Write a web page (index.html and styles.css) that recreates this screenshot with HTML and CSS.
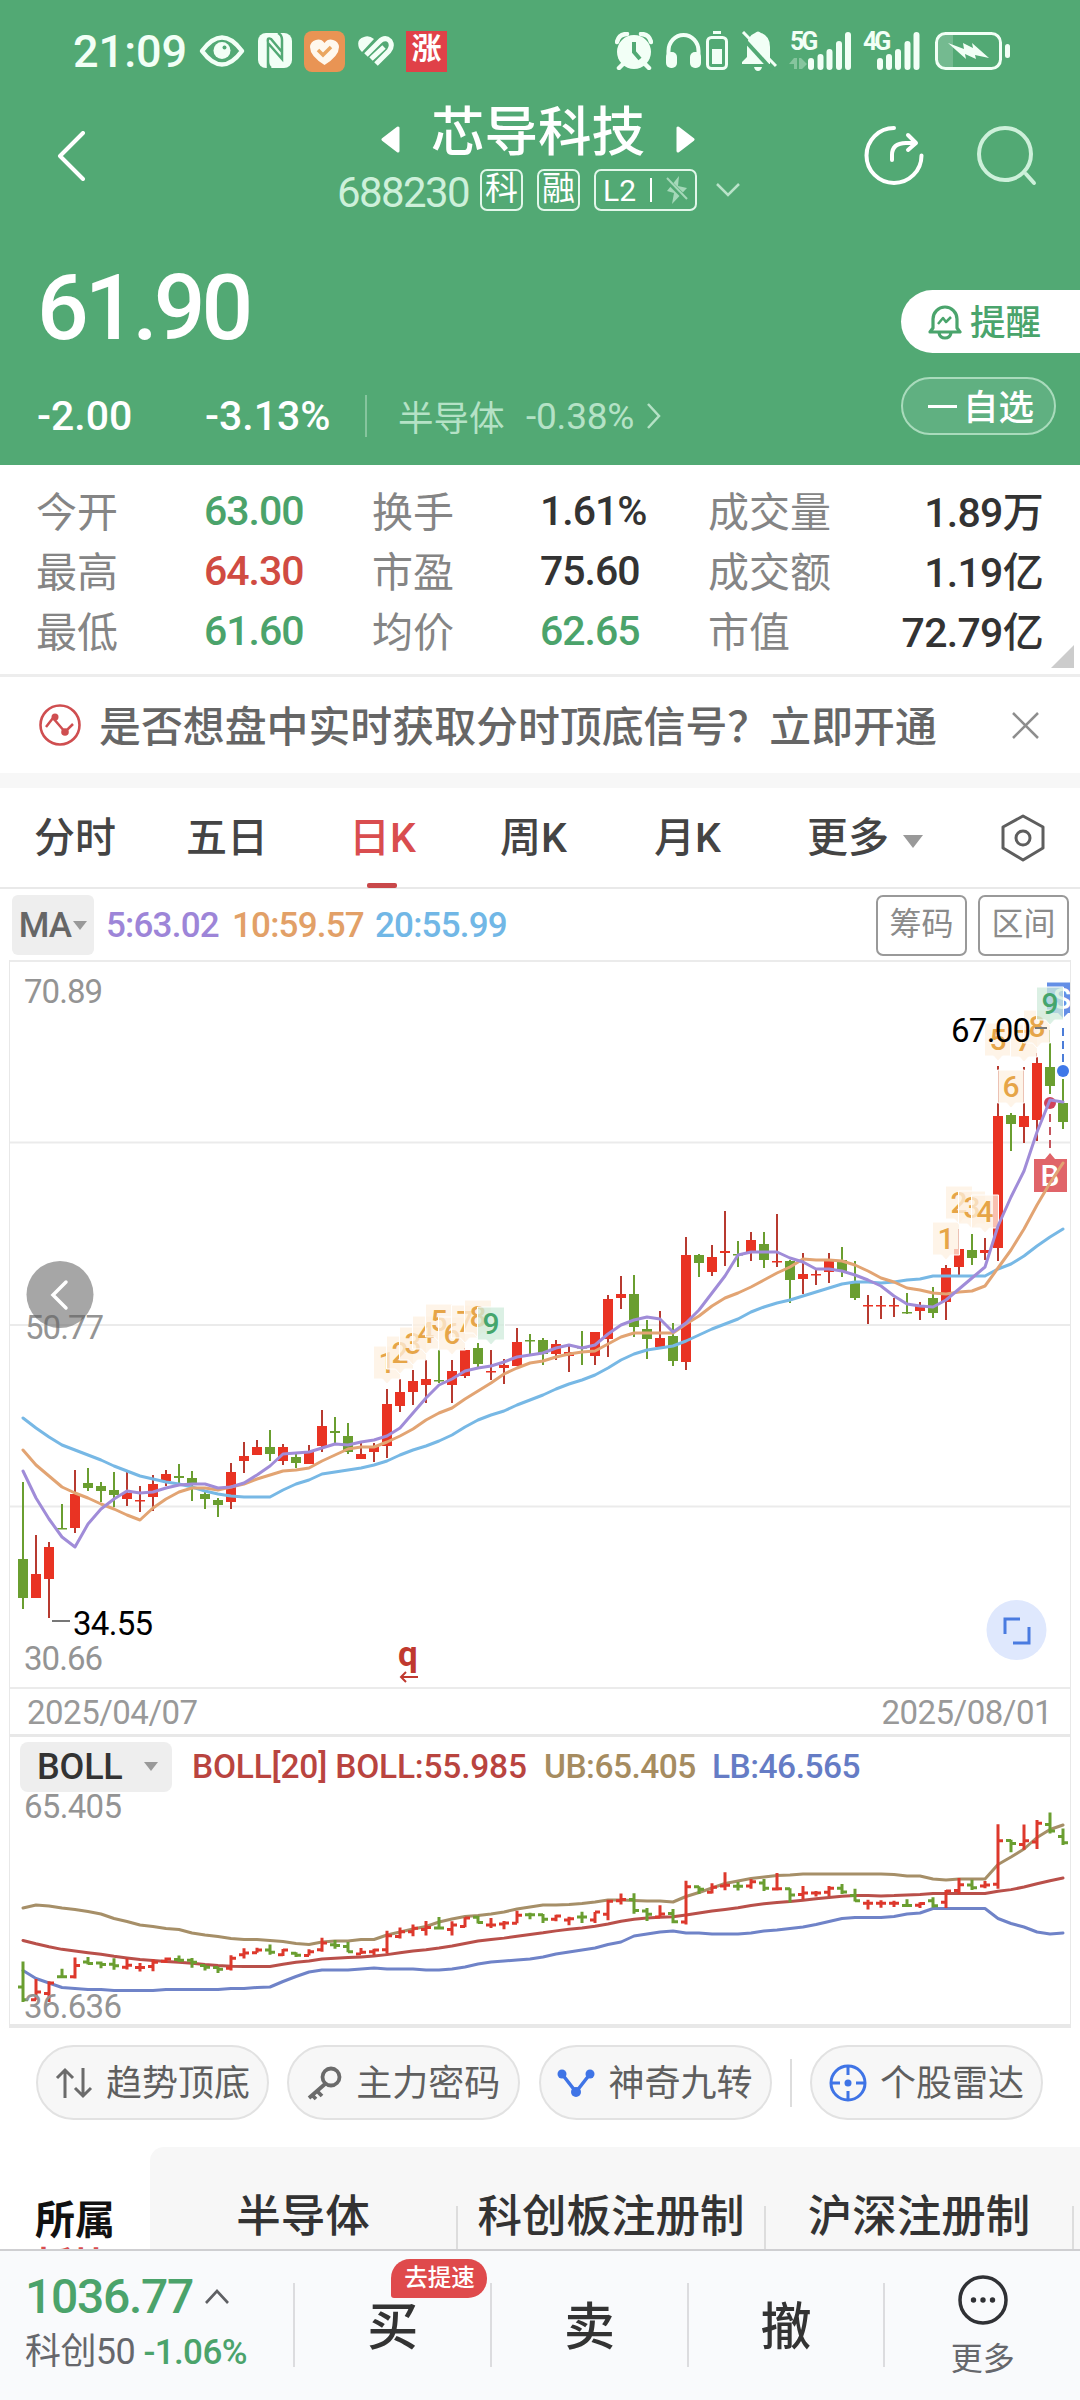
FILE: index.html
```
<!DOCTYPE html>
<html lang="zh-CN">
<head>
    <meta charset="UTF-8">
    <meta name="viewport" content="width=device-width, initial-scale=1.0">
    <title>芯导科技 688230</title>
    <link rel="stylesheet" href="styles.css">
</head>
<body>
    <header class="header">
        <div class="status-bar">
            <div class="status-left">
                <span class="clock">21:09</span>
                <svg class="ic-eye" width="46" height="32" viewBox="0 0 46 32">
                    <path d="M3 16Q23 -11 43 16Q23 43 3 16Z" fill="none" stroke="#f2fff6" stroke-width="4.5" stroke-linejoin="round"/>
                    <circle cx="23" cy="15.500" r="8.500" fill="#f2fff6"/>
                    <circle cx="25.500" cy="12.500" r="2" fill="#52a974"/>
                </svg>
                <svg class="ic-nfc" width="34" height="36" viewBox="0 0 34 36">
                    <rect width="34" height="35" rx="8" fill="#f2fff6"/>
                    <path d="M10 35V10L24 26V7Q24 2 20 0M10 9Q9 4 13 6L24 19M10 10V28Q10 33 13 35" fill="none" stroke="#52a974" stroke-width="2.500"/>
                </svg>
                <svg class="ic-health" width="41" height="41" viewBox="0 0 41 41">
                    <rect width="41" height="41" rx="8" fill="#e99454"/>
                    <path d="M20.500 34Q6 25 6 16A8 8 0 0 1 20.500 12A8 8 0 0 1 35 16Q35 25 20.500 34Z" fill="#fff8ee"/>
                    <path d="M14 19L19 24L27 16" fill="none" stroke="#eaa660" stroke-width="3.500"/>
                </svg>
                <svg class="ic-heart" width="36" height="31" viewBox="0 0 36 31">
                    <path d="M1 12Q-2 3 6 1Q11 -1 16 3L4 16Q2 14 1 12Z" fill="#f2fff6"/>
                    <path d="M8 19L21 6Q27 0 32 5Q35 10 31 15L18 28M13 23L26 11" fill="none" stroke="#f2fff6" stroke-width="5"/>
                </svg>
                <span class="ic-rise">涨</span>
            </div>
            <div class="status-right">
                <svg width="38" height="38" viewBox="0 0 38 38">
                    <circle cx="19" cy="20" r="17" fill="#f2fff6"/>
                    <path d="M2 10Q4 2 12 2M26 2Q34 2 36 10M8 32L4 36M30 32L34 36" fill="none" stroke="#f2fff6" stroke-width="4.500" stroke-linecap="round"/>
                    <path d="M19 10V20L25 27" fill="none" stroke="#52a974" stroke-width="4"/>
                </svg>
                <svg class="ic-headset" width="62" height="40" viewBox="0 0 62 40">
                    <path d="M2.500 28V20A15 16 0 0 1 32.500 20V28" fill="none" stroke="#f2fff6" stroke-width="4"/>
                    <rect x="0" y="21" width="11" height="16" rx="5" fill="#f2fff6"/>
                    <rect x="24" y="21" width="11" height="16" rx="5" fill="#f2fff6"/>
                    <rect x="47" y="0" width="8" height="3" fill="#f2fff6"/>
                    <rect x="41.500" y="6.500" width="19" height="31" rx="4" fill="none" stroke="#f2fff6" stroke-width="3"/>
                    <rect x="46" y="18" width="10" height="15" fill="#f2fff6"/>
                </svg>
                <svg class="ic-mute" width="36" height="40" viewBox="0 0 36 40">
                    <path d="M1 33V31L6 26V16Q6 5 14 2Q17 -1 20 2Q29 5 29 16V33ZM13 36H21Q20 40 17 40Q14 40 13 36Z" fill="#f2fff6"/>
                    <path d="M-1 4L31 39" stroke="#52a974" stroke-width="4"/>
                    <path d="M2 1L35 35" stroke="#f2fff6" stroke-width="3"/>
                </svg>
                <svg class="ic-signal" width="64" height="38" viewBox="0 0 64 38">
                    <text x="1" y="18" class="net">5G</text>
                    <path d="M5 26L0 32H5V37H8V26ZM10 37V26H12L18 32L13 37Z" fill="#86c59e"/>
                    <path d="M22 29V35M31.500 25V35M40.500 20V35M50 12V35M59 3V35" stroke="#f2fff6" stroke-width="6" stroke-linecap="round"/>
                </svg>
                <svg class="ic-signal second" width="58" height="38" viewBox="0 0 58 38">
                    <text x="0" y="18" class="net">4G</text>
                    <path d="M17 29V35M26 25V35M35 20V35M44.500 12V35M53.500 3V35" stroke="#f2fff6" stroke-width="6" stroke-linecap="round"/>
                </svg>
                <svg class="ic-battery" width="76" height="38" viewBox="0 0 76 38">
                    <rect x="3" y="3" width="15" height="32" fill="#74ba90"/>
                    <rect x="1.500" y="1.500" width="64" height="35" rx="9" fill="none" stroke="#f2fff6" stroke-width="3"/>
                    <path d="M13 11L29 17L28 11L38 16L37 11L54 26L40 23L41 27L30 22L31 27Z" fill="#f2fff6"/>
                    <rect x="70" y="12" width="5" height="14" rx="2.500" fill="#f2fff6"/>
                </svg>
            </div>
        </div>

        <div class="nav">
            <svg class="back" width="28" height="50" viewBox="0 0 28 50"><path d="M26 2L3 25L26 48" fill="none" stroke="#fff" stroke-width="4" stroke-linecap="round" stroke-linejoin="round"/></svg>
            <div class="nav-center">
                <div class="stock-name">
                    <svg width="19" height="27" viewBox="0 0 19 27"><path d="M17 2V25L2 13.500Z" fill="#fff" stroke="#fff" stroke-width="3" stroke-linejoin="round"/></svg>
                    <h1>芯导科技</h1>
                    <svg width="19" height="27" viewBox="0 0 19 27"><path d="M2 2V25L17 13.500Z" fill="#fff" stroke="#fff" stroke-width="3" stroke-linejoin="round"/></svg>
                </div>
                <div class="stock-code">
                    <span class="code">688230</span>
                    <span class="tag">科</span>
                    <span class="tag">融</span>
                    <span class="tag level">L2<i></i>
                        <svg width="22" height="28" viewBox="0 0 22 28"><path d="M13 0L12 10L21 12L6 28L8 17L1 15Z" fill="#a5d8b9"/><path d="M0 3L21 24" stroke="#52a974" stroke-width="5"/><path d="M1 2L21 23" stroke="#a5d8b9" stroke-width="2"/></svg>
                    </span>
                    <svg class="chev" width="24" height="14" viewBox="0 0 24 14"><path d="M1 1L12 12L23 1" fill="none" stroke="#b9e3c9" stroke-width="2.500"/></svg>
                </div>
            </div>
            <div class="nav-icons">
                <svg width="60" height="60" viewBox="0 0 60 60" fill="none" stroke="#fff" stroke-width="4" stroke-linecap="round" stroke-linejoin="round">
                    <path d="M30 2A27.500 27.500 0 1 0 57.500 29.500M28 34V29Q28 17 42 17H51M44 9L52 17L44 24"/>
                </svg>
                <svg width="60" height="60" viewBox="0 0 60 60" fill="none" stroke="#cdf0da" stroke-width="4" stroke-linecap="round">
                    <circle cx="28" cy="28" r="26"/><path d="M49 48L57 57"/>
                </svg>
            </div>
        </div>

        <div class="quote">
            <div class="quote-main">
                <div class="price">61.90</div>
                <div class="change">
                    <span class="diff">-2.00</span>
                    <span class="pct">-3.13%</span>
                    <span class="sector">半导体</span>
                    <span class="sector-pct">-0.38%</span>
                    <svg width="14" height="26" viewBox="0 0 14 26"><path d="M1 1L12 13L1 25" fill="none" stroke="#b5e2c6" stroke-width="2.500"/></svg>
                </div>
            </div>
            <div class="quote-side">
                <div class="remind">
                    <svg width="34" height="36" viewBox="0 0 34 36" fill="none" stroke="#4aa46c" stroke-width="3.200" stroke-linejoin="round">
                        <path d="M5 24V15A12 12 0 0 1 29 15V24L32 28H2ZM11 29Q12 34 17 34Q22 34 23 29"/><path d="M10 20L15 14L18 18L23 13" stroke-width="2.500"/>
                    </svg>
                    <span>提醒</span>
                </div>
                <div class="watch"><i></i><span>自选</span></div>
            </div>
        </div>
    </header>

    <section class="stats">
        <div class="col">
            <div><label>今开</label><b class="green">63.00</b></div>
            <div><label>最高</label><b class="red">64.30</b></div>
            <div><label>最低</label><b class="green">61.60</b></div>
        </div>
        <div class="col">
            <div><label>换手</label><b>1.61%</b></div>
            <div><label>市盈</label><b>75.60</b></div>
            <div><label>均价</label><b class="green">62.65</b></div>
        </div>
        <div class="col last">
            <div><label>成交量</label><b>1.89万</b></div>
            <div><label>成交额</label><b>1.19亿</b></div>
            <div><label>市值</label><b>72.79亿</b></div>
        </div>
        <span class="corner"></span>
    </section>

    <section class="notice">
        <svg width="42" height="42" viewBox="0 0 42 42" fill="none" stroke="#cf4e50" stroke-width="2.600">
            <circle cx="21" cy="21" r="19.500"/>
            <path d="M7 23L14 14L26 28L34 20" stroke-width="2.500"/>
            <circle cx="16" cy="13" r="3.500" fill="#cf4e50" stroke="none"/><circle cx="26" cy="28" r="3.800" fill="#cf4e50" stroke="none"/>
        </svg>
        <p>是否想盘中实时获取分时顶底信号？立即开通</p>
        <svg width="27" height="27" viewBox="0 0 27 27"><path d="M1 1L26 26M26 1L1 26" stroke="#8e8e8e" stroke-width="2.500"/></svg>
    </section>

    <nav class="tabs">
        <a class="t1">分时</a>
        <a class="t2">五日</a>
        <a class="t3"><span class="active">日K</span></a>
        <a class="t4">周K</a>
        <a class="t5">月K</a>
        <a class="more">更多<i class="tri"></i></a>
        <svg width="44" height="48" viewBox="0 0 44 48" fill="none" stroke="#5e5e5e" stroke-width="3" stroke-linejoin="round">
            <path d="M22 2L42 13V34L22 46L2 34V13Z"/><circle cx="22" cy="24" r="7"/>
        </svg>
    </nav>

    <section class="ma-row">
        <span class="ma-btn">MA<i class="tri"></i></span>
        <span class="ma5">5:63.02</span>
        <span class="ma10">10:59.57</span>
        <span class="ma20">20:55.99</span>
        <span class="box-btn">筹码</span>
        <span class="box-btn">区间</span>
    </section>

    <section class="panel">
        <svg id="kline" class="kline" width="1060" height="729" viewBox="10 960 1060 729"></svg>
        <div class="dates"><span>2025/04/07</span><span>2025/08/01</span></div>
        <div class="boll-row">
            <span class="boll-btn">BOLL<i class="tri"></i></span>
            <span class="boll-mid">BOLL[20] BOLL:55.985</span>
            <span class="boll-ub">UB:65.405</span>
            <span class="boll-lb">LB:46.565</span>
        </div>
        <svg id="boll" class="boll" width="1060" height="232" viewBox="10 1792 1060 232"></svg>
    </section>

    <section class="tools">
        <span class="pill">
            <svg width="38" height="32" viewBox="0 0 38 32" fill="none" stroke="#6b6b6b" stroke-width="3"><path d="M10 31V3M2 11L10 3L18 11M28 1V29M20 21L28 29L36 21"/></svg>
            <span>趋势顶底</span>
        </span>
        <span class="pill">
            <svg width="36" height="36" viewBox="0 0 36 36" fill="none" stroke="#6b6b6b" stroke-width="3.800"><circle cx="24" cy="12" r="8.500"/><path d="M18 19L2 33M10 26L15 31M5 30L9 34"/></svg>
            <span>主力密码</span>
        </span>
        <span class="pill">
            <svg width="38" height="32" viewBox="0 0 38 32"><path d="M5 7L19 25L33 7" fill="none" stroke="#3f74e6" stroke-width="3.500"/><g fill="#3f74e6"><circle cx="5" cy="7" r="4.500"/><circle cx="33" cy="7" r="4.500"/><circle cx="19" cy="25" r="5"/></g></svg>
            <span>神奇九转</span>
        </span>
        <i class="sep"></i>
        <span class="pill">
            <svg width="38" height="38" viewBox="0 0 38 38" fill="none" stroke="#3f74e6" stroke-width="3"><circle cx="19" cy="19" r="17"/><path d="M19 2V11M19 27V36M2 19H11M27 19H36"/><circle cx="19" cy="19" r="3.500" fill="#3f74e6" stroke="none"/></svg>
            <span>个股雷达</span>
        </span>
    </section>

    <section class="plates">
        <div class="plates-title">所属<em>板块</em></div>
        <div class="plates-list">
            <span>半导体</span>
            <span>科创板注册制</span>
            <span>沪深注册制</span>
        </div>
    </section>

    <footer class="bottom-bar">
        <div class="index">
            <div class="index-val">1036.77
                <svg width="24" height="15" viewBox="0 0 24 15"><path d="M1 14L12 2L23 14" fill="none" stroke="#5f6064" stroke-width="2.600"/></svg>
            </div>
            <div class="index-name">科创50 <span>-1.06%</span></div>
        </div>
        <div class="action">买<span class="badge">去提速</span></div>
        <div class="action">卖</div>
        <div class="action">撤</div>
        <div class="action more-action">
            <svg width="50" height="50" viewBox="0 0 50 50"><circle cx="25" cy="25" r="23" fill="none" stroke="#303135" stroke-width="3.500"/><g fill="#303135"><circle cx="15.500" cy="25" r="2.700"/><circle cx="25" cy="25" r="2.700"/><circle cx="34.500" cy="25" r="2.700"/></g></svg>
            <small>更多</small>
        </div>
    </footer>

    <script src="chart.js"></script>
</body>
</html>
```
FILE: styles.css
```
* {
    margin: 0;
    padding: 0;
    box-sizing: border-box;
}

body {
    width: 1080px;
    height: 2400px;
    overflow: hidden;
    background: #fff;
    color: #333;
    font-family: Roboto, "Noto Sans CJK SC", sans-serif;
    font-size: 41px;
    display: flex;
    flex-direction: column;
}

svg {
    display: block;
    flex: none;
}

i, em {
    font-style: normal;
}

.green { color: #4ba36b; }
.red { color: #d04b42; }

.tri {
    display: inline-block;
    border: 10px solid transparent;
    border-top: 13px solid #999;
    border-bottom: 0;
}

/* Header */
.header {
    height: 465px;
    flex: none;
    background: #52a974;
    color: #fff;
}

.status-bar {
    height: 100px;
    padding: 2px 74px 0 73px;
    display: flex;
    justify-content: space-between;
    align-items: center;
}

.status-left, .status-right {
    display: flex;
    align-items: center;
}

.clock {
    width: 126px;
    font-size: 45px;
    font-weight: 500;
    color: #f2fff6;
}

.ic-nfc { margin-left: 13px; }
.ic-health { margin-left: 12px; }
.ic-heart { margin-left: 13px; }

.ic-rise {
    width: 41px;
    height: 41px;
    margin-left: 12px;
    background: #e04148;
    color: #fff;
    font-size: 30px;
    font-weight: 700;
    line-height: 36px;
    text-align: center;
}

.status-right {
    margin-right: -5px;
}

.ic-headset { margin-left: 13px; }
.ic-mute { margin-left: 13px; }
.ic-signal { margin-left: 12px; }
.ic-signal.second { margin-left: 10px; }
.ic-battery { margin-left: 14px; }

.ic-signal {
    overflow: visible;
}

.net {
    font-size: 25px;
    font-weight: 700;
    fill: #f2fff6;
    letter-spacing: -3px;
}

.nav {
    height: 130px;
    padding: 0 43px 0 57px;
    display: flex;
}

.back {
    margin-top: 31px;
}

.nav-center {
    width: 404px;
    margin-left: 252px;
}

.stock-name {
    height: 62px;
    padding-right: 2px;
    display: flex;
    justify-content: center;
    align-items: center;
    gap: 31px;
}

.stock-name h1 {
    font-size: 53.5px;
    font-weight: 500;
    line-height: 62px;
    padding-top: 4px;
}

.stock-name svg {
    margin-top: 16px;
}

.stock-code {
    height: 56px;
    display: flex;
    align-items: center;
    color: #cdf0da;
}

.code {
    width: 143px;
    font-size: 42px;
    letter-spacing: -1.6px;
    padding-top: 4px;
}

.tag {
    width: 43px;
    height: 42px;
    margin-right: 14px;
    border: 2px solid #e2f7ea;
    border-radius: 7px;
    color: #fff;
    font-size: 33px;
    line-height: 35px;
    text-align: center;
}

.tag.level {
    width: 103px;
    padding: 0 7px;
    margin-right: 19px;
    display: flex;
    align-items: center;
    justify-content: space-between;
    font-size: 30px;
}

.tag i {
    width: 2px;
    height: 24px;
    background: #fff;
}

.nav-icons {
    display: flex;
    gap: 53px;
    margin-left: auto;
    padding-top: 26px;
}

.quote {
    display: flex;
    justify-content: space-between;
    height: 235px;
}

.quote-main {
    padding-left: 37px;
}

.price {
    height: 150px;
    padding-top: 25px;
    font-size: 91px;
    font-weight: 500;
    line-height: 106px;
    letter-spacing: -4px;
}

.change {
    height: 72px;
    display: flex;
    align-items: center;
    font-weight: 500;
}

.diff {
    width: 168px;
}

.pct {
    width: 162px;
    height: 42px;
    line-height: 42px;
    border-right: 2px solid #86c59e;
}

.sector {
    width: 128px;
    margin: -2px 0 0 31px;
    font-size: 35.5px;
    font-weight: 400;
    color: #b5e2c6;
}

.sector-pct {
    width: 121px;
    font-size: 37px;
    font-weight: 400;
    color: #b5e2c6;
    letter-spacing: -0.2px;
}

.quote-side {
    width: 179px;
    padding-top: 60px;
    font-size: 35.5px;
    font-weight: 500;
}

.quote-side span {
    margin-top: -4px;
}

.remind {
    height: 63px;
    padding-left: 27px;
    border-radius: 32px 0 0 32px;
    background: #fff;
    color: #4aa46c;
    display: flex;
    align-items: center;
    gap: 8px;
}

.watch {
    width: 155px;
    height: 58px;
    margin-top: 24px;
    padding-left: 25px;
    border: 2px solid #a9dbbc;
    border-radius: 29px;
    background: #60b081;
    display: flex;
    align-items: center;
    gap: 6px;
}

.watch i {
    width: 29px;
    height: 3px;
    background: #fff;
}

/* Stats */
.stats {
    height: 212px;
    flex: none;
    padding: 16px 37px 0 36px;
    border-bottom: 3px solid #ededed;
    display: flex;
    position: relative;
}

.col {
    width: 336px;
}

.col.last {
    width: 335px;
}

.col div {
    height: 60px;
    display: flex;
    align-items: center;
}

.col label {
    width: 168px;
    margin-top: -5px;
    color: #858585;
}

.col b {
    font-weight: 500;
    letter-spacing: -1px;
}

.col.last div {
    justify-content: space-between;
}

.col.last b {
    margin-top: -4px;
    white-space: nowrap;
    letter-spacing: -0.7px;
}

.corner {
    position: absolute;
    right: 6px;
    bottom: 6px;
    border-left: 23px solid transparent;
    border-bottom: 23px solid #ccc;
}

/* Notice */
.notice {
    height: 111px;
    flex: none;
    padding: 0 41px 0 39px;
    border-bottom: 15px solid #f7f7f7;
    display: flex;
    align-items: center;
    color: #666;
    font-weight: 500;
}

.notice p {
    flex: 1;
    margin: -4px 0 0 18px;
    font-size: 41.9px;
    white-space: nowrap;
}

/* Period tabs */
.tabs {
    height: 101px;
    flex: none;
    padding: 0 35px 0 34px;
    border-bottom: 2px solid #e9e9e9;
    display: flex;
    align-items: center;
    font-weight: 500;
    color: #444;
}

.tabs a {
    height: 100px;
    line-height: 101px;
}

.t1 { width: 152px; }
.t2 { width: 163px; }
.t3 { width: 151px; }
.t4 { width: 154px; }
.t5 { width: 153px; }
.more { flex: 1; }

.active {
    display: inline-block;
    height: 100px;
    position: relative;
    color: #d94d4f;
}

.active::after {
    content: "";
    position: absolute;
    left: 50%;
    bottom: 0;
    width: 30px;
    height: 5px;
    margin-left: -15px;
    border-radius: 2px;
    background: #c9484a;
}

.tabs .tri {
    margin: 0 0 4px 14px;
}

/* MA row */
.ma-row {
    height: 71px;
    flex: none;
    padding: 1px 11px 0 12px;
    display: flex;
    align-items: center;
    font-size: 35px;
    font-weight: 500;
    letter-spacing: -0.8px;
}

.ma-btn {
    width: 82px;
    height: 60px;
    margin-right: 12px;
    border-radius: 6px;
    background: #eee;
    color: #666;
    display: flex;
    align-items: center;
    justify-content: center;
}

.ma-btn .tri, .boll-btn .tri {
    border-width: 9px 7px 0;
    margin-left: 2px;
}

.ma5 { width: 126px; color: #9d85d8; }
.ma10 { width: 143px; color: #e2a067; }
.ma20 { flex: 1; color: #71b7e6; }

.box-btn {
    width: 91px;
    height: 61px;
    margin-left: 11px;
    border: 2px solid #999;
    border-radius: 7px;
    color: #8b8b8b;
    font-size: 32px;
    font-weight: 400;
    letter-spacing: 0;
    line-height: 55px;
    text-align: center;
}

/* Chart panel */
.panel {
    width: 1062px;
    height: 1068px;
    flex: none;
    margin-left: 9px;
    border: 1px solid #e8e8e8;
    border-width: 0 1px 4px;
    display: flex;
    flex-direction: column;
}

.dates {
    height: 48px;
    padding: 2px 18px 0 17px;
    border-bottom: 3px solid #e8e8e8;
    display: flex;
    justify-content: space-between;
    align-items: center;
    color: #999;
    font-size: 33px;
    letter-spacing: -0.5px;
}

.boll-row {
    height: 55px;
    padding: 4px 0 0 10px;
    display: flex;
    align-items: center;
    font-size: 33.5px;
    font-weight: 500;
    letter-spacing: -0.2px;
}

.boll-btn {
    width: 152px;
    height: 50px;
    margin-right: 20px;
    padding-left: 17px;
    border-radius: 8px;
    background: #eee;
    font-size: 36px;
    display: flex;
    align-items: center;
}

.boll-btn .tri {
    margin-left: 21px;
}

.boll-mid { width: 352px; color: #b9443f; }
.boll-ub { width: 168px; color: #a68c60; letter-spacing: -0.5px; }
.boll-lb { color: #657cc5; letter-spacing: -0.5px; }

.axis {
    font-size: 33px;
    fill: #949494;
}

.mark {
    font-size: 33px;
    fill: #000;
}

.nine {
    font-size: 30px;
    font-weight: 500;
    text-anchor: middle;
}

/* Tool pills */
.tools {
    height: 119px;
    flex: none;
    padding: 17px 37px 0 36px;
    display: flex;
    justify-content: space-between;
}

.pill {
    width: 233px;
    height: 75px;
    border: 2px solid #e2e2e2;
    border-radius: 38px;
    background: #f7f7f7;
    color: #5f5f5f;
    font-size: 36px;
    display: flex;
    align-items: center;
    justify-content: center;
    gap: 13px;
}

.pill span {
    margin-top: -5px;
}

.sep {
    width: 2px;
    height: 48px;
    margin-top: 14px;
    background: #ddd;
}

/* Related plates */
.plates {
    height: 102px;
    flex: none;
    display: flex;
    overflow: hidden;
}

.plates-title {
    width: 150px;
    padding: 45px 0 0 35px;
    color: #111;
    font-weight: 700;
    font-size: 40px;
    line-height: 57px;
}

.plates-title em {
    display: block;
    margin-top: -7px;
    color: #d94d4f;
    font-size: 38px;
    line-height: 48px;
}

.plates-list {
    flex: 1;
    background: #f7f7f7;
    border-radius: 14px 0 0;
    display: flex;
    align-items: flex-end;
    font-size: 44.5px;
    font-weight: 500;
}

.plates-list span {
    width: 308px;
    height: 43px;
    border-right: 2px solid #ddd;
    line-height: 22px;
    text-align: center;
    white-space: nowrap;
}

/* Bottom bar */
.bottom-bar {
    height: 151px;
    flex: none;
    border-top: 2px solid #cfcfd2;
    background: #f9fafc;
    display: flex;
}

.index {
    width: 294px;
    padding: 16px 0 0 25px;
}

.index-val {
    height: 58px;
    display: flex;
    align-items: center;
    gap: 12px;
    color: #4ba36b;
    font-size: 48px;
    font-weight: 500;
    letter-spacing: -1.3px;
}

.index-name {
    height: 52px;
    line-height: 54px;
    color: #66676c;
    font-size: 36px;
    letter-spacing: -0.6px;
    white-space: nowrap;
}

.index-name span {
    color: #4ba36b;
    font-size: 35px;
    font-weight: 500;
}

.action {
    width: 197px;
    height: 84px;
    margin-top: 32px;
    border-left: 2px solid #dcdcdf;
    font-size: 51px;
    font-weight: 500;
    line-height: 90px;
    text-align: center;
    position: relative;
}

.badge {
    position: absolute;
    left: 96px;
    top: -24px;
    width: 96px;
    height: 39px;
    border-radius: 19px 19px 19px 3px;
    background: #df4a4c;
    color: #fff;
    font-size: 23.5px;
    line-height: 38px;
}

.more-action {
    display: flex;
    flex-direction: column;
    align-items: center;
}

.more-action svg {
    margin-top: -8px;
}

.more-action small {
    margin-top: 9px;
    font-size: 32px;
    font-weight: 400;
    line-height: 50px;
    color: #66676c;
}
```
FILE: chart.js
```
// First bar position and bar spacing
const X0 = 23;
const STEP = 13;

// color, high, body top, body bottom, low
const candles = [
    ['g', 1482, 1559, 1598, 1609], ['r', 1535, 1574, 1598, 1598], ['r', 1542, 1547, 1579, 1618],
    ['g', 1504, 1528, 1528, 1529], ['r', 1470, 1494, 1528, 1533], ['g', 1468, 1483, 1488, 1491],
    ['g', 1482, 1486, 1491, 1502], ['g', 1472, 1490, 1495, 1507], ['r', 1472, 1493, 1499, 1506],
    ['r', 1486, 1500, 1500, 1512], ['r', 1475, 1484, 1497, 1511], ['r', 1470, 1474, 1481, 1486],
    ['g', 1464, 1476, 1478, 1483], ['g', 1471, 1478, 1484, 1501], ['g', 1492, 1494, 1499, 1509],
    ['g', 1498, 1500, 1505, 1517], ['r', 1463, 1472, 1502, 1509], ['r', 1442, 1456, 1461, 1473],
    ['r', 1440, 1447, 1455, 1455], ['g', 1430, 1447, 1454, 1461], ['r', 1444, 1447, 1461, 1465],
    ['g', 1454, 1457, 1463, 1468], ['r', 1445, 1452, 1464, 1464], ['r', 1410, 1426, 1446, 1452],
    ['g', 1417, 1431, 1433, 1443], ['g', 1423, 1436, 1452, 1454], ['r', 1441, 1454, 1459, 1459],
    ['r', 1443, 1447, 1452, 1462], ['r', 1389, 1404, 1446, 1458], ['r', 1379, 1392, 1406, 1412],
    ['r', 1370, 1381, 1392, 1405], ['r', 1359, 1379, 1385, 1403], ['g', 1347, 1380, 1380, 1383],
    ['r', 1360, 1371, 1385, 1403], ['r', 1348, 1350, 1376, 1378], ['g', 1343, 1348, 1364, 1367],
    ['r', 1350, 1371, 1371, 1380], ['r', 1359, 1365, 1368, 1384], ['r', 1328, 1342, 1366, 1366],
    ['g', 1334, 1340, 1340, 1354], ['g', 1338, 1340, 1354, 1365], ['r', 1340, 1344, 1354, 1360],
    ['r', 1346, 1352, 1356, 1372], ['g', 1331, 1347, 1347, 1365], ['r', 1332, 1332, 1356, 1365],
    ['r', 1295, 1299, 1339, 1357], ['r', 1276, 1294, 1298, 1309], ['g', 1275, 1294, 1327, 1337],
    ['g', 1320, 1329, 1339, 1359], ['r', 1311, 1338, 1347, 1347], ['g', 1323, 1336, 1361, 1366],
    ['r', 1237, 1255, 1362, 1370], ['g', 1254, 1255, 1263, 1277], ['r', 1245, 1257, 1272, 1276],
    ['r', 1211, 1251, 1253, 1266], ['g', 1241, 1254, 1254, 1267], ['r', 1232, 1240, 1253, 1261],
    ['g', 1232, 1244, 1260, 1268], ['r', 1214, 1261, 1262, 1267], ['g', 1260, 1261, 1280, 1303],
    ['r', 1253, 1274, 1279, 1294], ['r', 1268, 1274, 1274, 1285], ['r', 1253, 1260, 1272, 1283],
    ['g', 1247, 1260, 1271, 1277], ['g', 1261, 1282, 1298, 1300], ['r', 1295, 1305, 1305, 1324],
    ['r', 1296, 1305, 1305, 1319], ['r', 1298, 1305, 1305, 1317], ['g', 1293, 1312, 1312, 1314],
    ['r', 1302, 1306, 1311, 1320], ['g', 1287, 1298, 1313, 1318], ['r', 1265, 1268, 1302, 1320],
    ['r', 1229, 1249, 1267, 1277], ['g', 1234, 1250, 1258, 1265], ['r', 1238, 1250, 1253, 1260],
    ['r', 1066, 1116, 1248, 1261], ['g', 1113, 1115, 1124, 1151], ['r', 1067, 1116, 1127, 1143],
    ['r', 1053, 1063, 1120, 1141], ['g', 1030, 1067, 1086, 1094], ['g', 1079, 1103, 1122, 1129]
];

const ma5 = [1471,1498,1519,1537,1547,1524,1509,1499,1491,1493,1492,1488,1485,1484,1484,1488,1487,1483,1475,1466,
    1454,1453,1452,1448,1444,1445,1442,1440,1436,1428,1413,1398,1385,1379,1371,1368,1366,1362,1357,1355,
    1353,1348,1345,1348,1345,1334,1325,1320,1317,1319,1332,1323,1310,1293,1276,1255,1252,1252,1252,1258,
    1262,1269,1269,1271,1275,1280,1286,1296,1304,1306,1307,1300,1289,1278,1267,1226,1197,1171,1132,1100,1102];
const ma10 = [1450,1465,1476,1487,1493,1498,1504,1509,1515,1520,1508,1499,1492,1488,1488,1490,1487,1484,1479,1475,
    1471,1470,1468,1461,1455,1449,1447,1447,1442,1436,1429,1420,1413,1408,1399,1391,1383,1374,1368,1363,
    1361,1357,1354,1352,1351,1344,1337,1333,1333,1333,1333,1324,1316,1306,1298,1293,1287,1280,1273,1267,
    1259,1260,1260,1261,1265,1271,1278,1282,1288,1290,1293,1294,1292,1291,1286,1268,1250,1229,1205,1183,1163];
const ma20 = [1418,1428,1437,1445,1450,1455,1460,1466,1471,1476,1479,1482,1484,1487,1491,1494,1496,1497,1497,1497,
    1490,1484,1480,1474,1472,1470,1468,1465,1461,1455,1450,1446,1441,1435,1427,1420,1415,1411,1405,1400,
    1395,1389,1384,1380,1375,1368,1360,1354,1350,1348,1346,1341,1335,1329,1324,1319,1312,1307,1303,1300,
    1296,1292,1288,1284,1282,1282,1283,1282,1280,1279,1276,1276,1276,1276,1276,1269,1264,1256,1246,1237,1229];

const upper = [1908,1905,1906,1908,1909.5,1911.5,1914,1918.5,1921.5,1925,1926.5,1928.5,1929.5,1933,1935,1936.5,1938.5,1939.5,1939.5,1940.5,
    1941.5,1943.5,1944.5,1942,1941,1941,1939.5,1939.5,1935,1932,1929,1926.5,1922,1919,1916.5,1915.5,1914,1912,1909,1907,
    1905,1905,1904.5,1903.5,1902,1900,1900,1900.5,1901,1901,1902,1896.5,1892.5,1888,1883.5,1881,1878.5,1877,1875.5,1875,
    1874,1874,1874,1874,1874,1874,1874,1874.5,1876,1876,1879,1880,1879,1879,1879,1864.5,1857,1849,1837.5,1829.5,1825];
const lower = [1970.5,1978.5,1983,1987.5,1988.5,1989.5,1989.5,1990.5,1990.5,1990.5,1990.5,1989.5,1989.5,1989.5,1989.5,1989.5,1988.5,1988.5,1987.5,1987,
    1981.5,1976.5,1972,1970,1970,1970,1969,1968,1969,1969,1969,1970,1970,1969,1967,1964,1962,1961,1960,1959,
    1957,1954,1952,1950,1948,1944.5,1942,1936,1934,1932,1931,1933,1933,1934,1934,1934,1933,1931,1930,1928.5,
    1927,1924.5,1921.5,1918.5,1917.5,1917.5,1917.5,1916.5,1914,1913,1908.5,1908.5,1908.5,1908.5,1908.5,1918.5,1923.5,1927,1932,1934,1933];

const colors = { r: '#e93323', g: '#6a9e30' };
const wickColors = { r: '#b73a30', g: '#6a9e30' };

function barX(i) {
    return X0 + i * STEP;
}

function line(values, color) {
    const points = values.map((y, i) => `${barX(i)},${y}`).join(' ');
    return `<polyline points="${points}" fill="none" stroke="${color}" stroke-width="3" stroke-linejoin="round" stroke-linecap="round"/>`;
}

// Nine-turn counter drawn above a bar
function nineBadge(i, n) {
    const x = barX(i);
    const y = candles[i][1] - 43;
    const last = n === 9;
    const path = `M${x - 13.5} ${y}h27v33h-9l-4.500 5l-4.500 -5h-9z`;
    return `<path d="${path}" fill="${last ? '#cfebdb' : '#fdf0e0'}" fill-opacity="0.75" stroke="#fff" stroke-width="1"/>
        <text class="nine" x="${x}" y="${y + 27}" fill="${last ? '#45a56c' : '#e6a548'}">${n}</text>`;
}

function drawKline() {
    let out = '';
    [961, 1142.5, 1325, 1506.5, 1688].forEach(y => {
        out += `<path d="M10 ${y}H1070" stroke="#ebebeb" stroke-width="2"/>`;
    });
    candles.forEach(([c, high, top, bottom, low], i) => {
        const x = barX(i);
        const h = Math.max(bottom - top, 1.5);
        out += `<path d="M${x} ${high}V${low}" stroke="${wickColors[c]}" stroke-width="2"/>`;
        out += `<rect x="${x - 5}" y="${top}" width="10" height="${h}" fill="${colors[c]}"/>`;
    });

    // Sell and buy marks
    out += `<path d="M1047 982.500H1079V1013H1068L1063 1018L1058 1013H1047Z" fill="#648fe6"/>
        <text x="1062" y="1009" class="nine" fill="#fff">S</text>
        <path d="M1063 1028V1066" stroke="#4c7dd8" stroke-width="2" stroke-dasharray="8 5"/>
        <circle cx="1063" cy="1071" r="6" fill="#3f78e8"/>
        <circle cx="1050" cy="1103" r="6" fill="#d0425a"/>
        <path d="M1050 1114V1149" stroke="#c4545c" stroke-width="2" stroke-dasharray="8 5"/>
        <path d="M1034 1159H1045L1050 1153L1055 1159H1067V1192H1034Z" fill="#e06469"/>
        <text x="1050" y="1186" class="nine" fill="#fff">B</text>`;

    for (let n = 1; n <= 9; n++) {
        out += nineBadge(27 + n, n) + nineBadge(70 + n, n);
    }

    out += line(ma20, '#77b8e5') + line(ma10, '#e2a473') + line(ma5, '#a08cd8');

    out += `<text class="axis" x="24" y="1003" textLength="79">70.89</text>
        <text class="axis" x="25" y="1339" textLength="79">50.77</text>
        <text class="axis" x="24" y="1670" textLength="79">30.66</text>
        <path d="M52 1621H70M1035 1028H1047" stroke="#777" stroke-width="2"/>
        <text class="mark" x="73" y="1635" textLength="80">34.55</text>
        <text class="mark" x="951" y="1042" textLength="80">67.00</text>
        <text x="398" y="1666" font-size="35" font-weight="700" fill="#c0392f">q</text>
        <path d="M418 1677H401M406 1672L401 1677L406 1682" fill="none" stroke="#c0392f" stroke-width="2"/>`;

    out += `<circle cx="60" cy="1294.500" r="33.500" fill="#606060" fill-opacity="0.56"/>
        <path d="M66 1282L53 1295L66 1308" fill="none" stroke="#fff" stroke-width="3.500" stroke-linecap="round"/>
        <circle cx="1016.500" cy="1630" r="30" fill="#dfe8fd"/>
        <path d="M1005 1634V1619H1020M1013 1643H1029V1627" fill="none" stroke="#4a7be0" stroke-width="3"/>`;
    document.getElementById('kline').innerHTML = out;
}

// The lower panel reuses the bars on its own price scale
function drawBoll() {
    const scale = y => 1812.4 + (y - 1030) * 0.33;
    let out = line(upper, '#a68f68') + line(lower, '#6f83c8') + line(ma20.map(scale), '#b9504a');
    candles.forEach(([c, high, top, bottom, low], i) => {
        const x = barX(i);
        const open = scale(c === 'r' ? bottom : top);
        const close = scale(c === 'r' ? top : bottom);
        out += `<path d="M${x} ${scale(high)}V${Math.min(scale(low), 2002)}M${x - 5} ${open}H${x}M${x} ${close}H${x + 5}"
            fill="none" stroke="${c === 'r' ? '#dd382c' : '#6a9e30'}" stroke-width="3"/>`;
    });
    out += `<text class="axis" x="24" y="1818" textLength="98">65.405</text>
        <text class="axis" x="24" y="2018" textLength="98">36.636</text>`;
    document.getElementById('boll').innerHTML = out;
}

drawKline();
drawBoll();
```
